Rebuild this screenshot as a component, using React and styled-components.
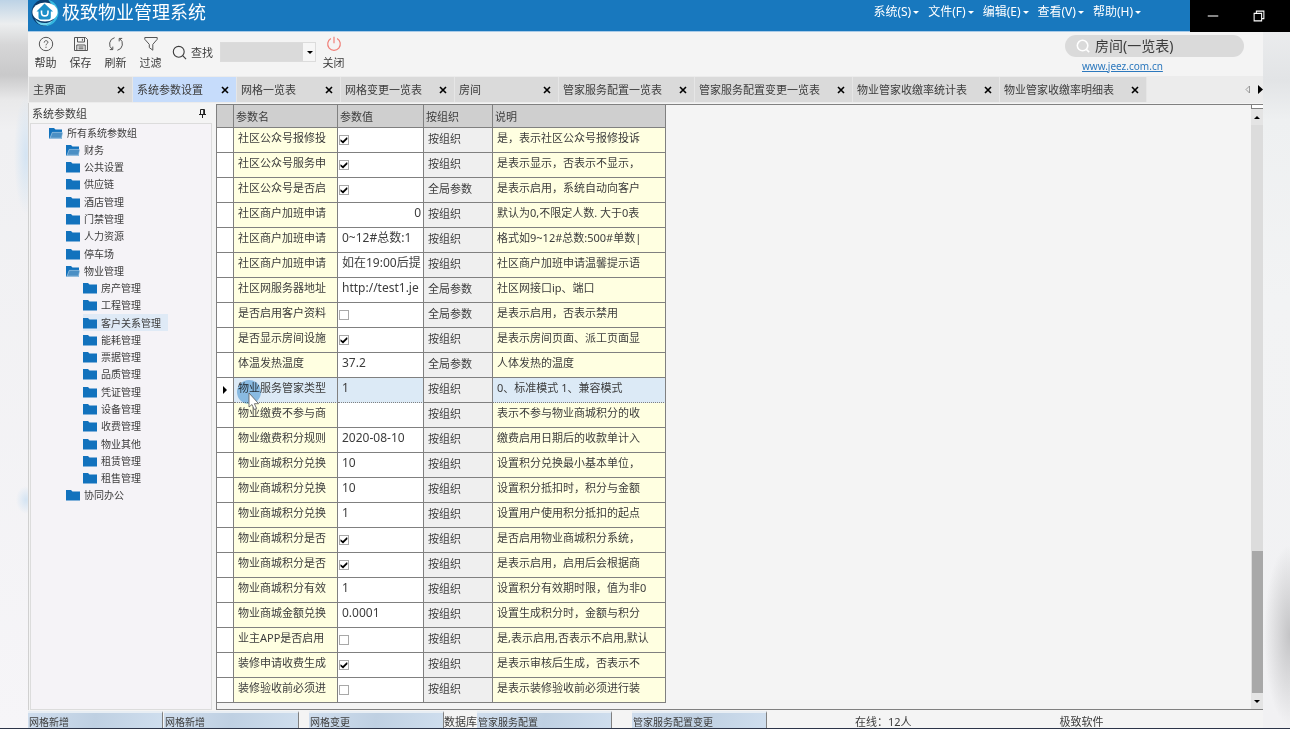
import React from 'react'
import styled, { createGlobalStyle } from 'styled-components'

const color = {
  title: '#1878be',
  text: '#3c3c3c',
  line: '#808080',
  header: '#cfcfcf',
  tab: '#dadada',
  tabActive: '#c6dcfb',
  note: '#ffffe1',
  selected: '#dceaf6',
  folder: '#1272bd'
}

const GlobalStyle = createGlobalStyle`
  * { box-sizing: border-box; }
  body {
    margin: 0;
    font-family: "Noto Sans", "Noto Sans CJK SC", sans-serif;
    font-size: 11px;
    color: ${color.text};
  }
  button, select, input { font: inherit; color: inherit; margin: 0; }
  button { border: 0; padding: 0; background: none; }
`

const Desktop = styled.div`
  display: flex;
  flex-direction: column;
  min-height: 100vh;
  border-bottom: 1px solid #2c3448;
  background:
    radial-gradient(ellipse 26px 90px at 100% 635px, #c4c4c6, transparent),
    radial-gradient(ellipse 12px 60px at 26px 155px, #d4e4f3, transparent),
    radial-gradient(ellipse 10px 14px at 26px 500px, #d4e4f3, transparent),
    linear-gradient(#f0f1f2, #e2e4e6 80px, #eef0f1 120px, #f2f3f4 300px, #f1f1f3) right / 27px 100% no-repeat,
    linear-gradient(#bdd3e6, #eceeef 24px, #d6d6d7 45px, #c9c9ca 75px, #e9e9ea 100px, #f0f0f2 130px, #f6f5f8);
`

/* title bar */

const TitleBar = styled.header`
  display: flex;
  height: 32px;
  padding-left: 28px;
`
const TitleMain = styled.div`
  flex: 1;
  display: flex;
  align-items: flex-start;
  padding: 0 49px 0 3px;
  background: ${color.title};
  border-bottom: 1px solid #a9cbe8;
  color: #fff;
`
const AppName = styled.h1`
  flex: 1;
  margin: 0 0 0 3px;
  font-size: 18px;
  font-weight: 400;
  line-height: 24px;
  white-space: nowrap;
`
const Menu = styled.nav`
  display: flex;
  gap: 9px;
`
const MenuButton = styled.button`
  display: flex;
  align-items: center;
  gap: 2px;
  font-size: 12px;
  line-height: 24px;
  white-space: nowrap;
`
const Caption = styled.div`
  display: flex;
  width: 100px;
  padding-right: 8px;
  background: #000;
  color: #fff;
`
const CaptionButton = styled.button`
  flex: 1;
  display: flex;
  align-items: center;
  justify-content: center;
`
const Caret = styled.span`
  border: 3px solid transparent;
  border-bottom-width: 0;
  border-top-color: currentColor;
`

/* toolbar */

const Window = styled.div`
  flex: 1;
  display: flex;
  flex-direction: column;
  margin: 0 27px 0 28px;
  background: #f4f4f4;
`
const Toolbar = styled.div`
  display: flex;
  align-items: center;
  height: 44px;
  padding: 0 19px 0 0;
`
const ToolButton = styled.button`
  display: flex;
  flex-direction: column;
  align-items: center;
  width: 35px;
  gap: 2px;
  line-height: 18px;

  > svg { color: ${p => p.$danger ? '#f07f78' : '#555'}; }
`
const Find = styled.label`
  display: flex;
  align-items: center;
  gap: 4px;
  margin: 0 7px 4px 4px;
`
const Combo = styled.div`
  position: relative;
  width: 96px;
  height: 20px;
  margin-bottom: 4px;

  > select {
    display: block;
    width: 100%;
    height: 100%;
    appearance: none;
    border: 1px solid #dcdcdc;
    border-radius: 0;
    background: linear-gradient(to left, #f6f6f6 12px, #dadada 12px);
  }

  > ${Caret} {
    position: absolute;
    right: 3px;
    top: 9px;
    color: #000;
    pointer-events: none;
  }
`
const QuickSearch = styled.div`
  display: flex;
  flex-direction: column;
  gap: 1px;
  width: 179px;
  margin-left: auto;

  > a {
    margin-left: 17px;
    color: #2c78bd;
    font-size: 10px;
    line-height: 16px;
  }
`
const SearchBox = styled.label`
  display: flex;
  align-items: center;
  gap: 5px;
  height: 22px;
  padding: 0 12px 0 11px;
  border-radius: 11px;
  background: #dadada;

  > input {
    flex: 1;
    min-width: 0;
    padding: 0;
    border: 0;
    background: none;
    font-size: 14px;
    line-height: 20px;
  }
`

/* tabs */

const TabBar = styled.div`
  display: flex;
  height: 27px;
  padding: 1px 0 1px 1px;
  background: #ececec;
`
const Tab = styled.div`
  display: flex;
  align-items: center;
  justify-content: space-between;
  min-width: 104px;
  padding: 0 6px 0 4px;
  gap: 16px;
  border-right: 1px solid #e6e6e6;
  background: ${p => p.$active ? color.tabActive : color.tab};
  white-space: nowrap;

  > button { line-height: 20px; }
  > button:last-child { display: flex; padding: 1px; color: #000; }
`
const TabArrows = styled.div`
  display: flex;
  align-items: center;
  gap: 8px;
  margin-left: auto;

  > button { display: flex; }
`

/* work area */

const Workspace = styled.main`
  flex: 1;
  display: flex;
  border-left: 1px solid #d0d0d0;
`
const Sidebar = styled.aside`
  display: flex;
  flex-direction: column;
  width: 187px;
  padding: 0 4px 0 1px;
`
const SidebarHead = styled.div`
  display: flex;
  align-items: center;
  justify-content: space-between;
  height: 20px;
  padding: 0 6px 0 2px;
`
const Tree = styled.div`
  flex: 1;
  border: 1px solid #dcdcdc;
  background: #f5f3f7;
`
const TreeList = styled.ul`
  display: grid;
  grid-auto-rows: 1fr;
  height: 380px;
  margin: 0;
  padding: 0;
  list-style: none;
`
const TreeItem = styled.li`
  display: flex;
  padding-left: ${p => 18 + p.$depth * 17}px;
`
const TreeButton = styled.button`
  display: flex;
  align-items: center;
  gap: 4px;
  padding-right: 7px;
  font-size: 10px;
  line-height: 16px;
  background: ${p => p.$selected ? '#dfeaf6' : 'none'};
`
const GridPanel = styled.section`
  flex: 1;
  display: flex;
  justify-content: space-between;
  margin-top: 1px;
  border: 1px solid ${color.line};
  border-right: 0;
`
const Table = styled.table`
  align-self: flex-start;
  width: 449px;
  table-layout: fixed;
  border-collapse: separate;
  border-spacing: 0;

  th, td {
    border: 0 solid ${color.line};
    border-width: 0 1px 1px 0;
    overflow: hidden;
    white-space: nowrap;
    text-align: left;
    font-weight: 400;
  }
`
const HeadCell = styled.th`
  height: 23px;
  padding: 0 2px;
  background: ${color.header};
`
const Cell = styled.td`
  height: 25px;
  padding: 0 2px 0 4px;
  vertical-align: top;
  line-height: 20px;
  background: ${p => p.$selected ? color.selected : p.$bg || '#fff'};

  && {
    text-align: ${p => p.$right ? 'right' : 'left'};
    border-bottom-style: ${p => p.$selected ? 'dotted' : 'solid'};
  }
`
const NameCell = styled(Cell)`
  && {
    position: relative;
    overflow: ${p => p.$selected ? 'visible' : 'hidden'};
  }
`
const ValueCell = styled(Cell)`
  font-size: 12px;
`
const CheckCell = styled(Cell)`
  padding: 0 1px;
  vertical-align: middle;
`
const OrgCell = styled(Cell)`
  line-height: 22px;
`
const MarkCell = styled(Cell)`
  padding: 0 6px;
  vertical-align: middle;
`
const Check = styled.input`
  display: block;
  width: 10px;
  height: 10px;
  appearance: none;
  border: 1px solid #a8a8a8;
  background: #fff;

  &:checked::before {
    content: "";
    display: block;
    width: 8px;
    height: 8px;
    background: #000;
    clip-path: polygon(6% 42%, 36% 64%, 88% 12%, 94% 38%, 38% 94%, 6% 66%);
  }
`
const RowMark = styled.span`
  display: block;
  width: 4px;
  border: 4px solid transparent;
  border-right-width: 0;
  border-left-color: #000;
`
const Pointer = styled.svg`
  position: absolute;
  left: 3px;
  top: 2px;
  z-index: 1;
  pointer-events: none;
  mix-blend-mode: ${p => p.$blend || 'normal'};
`
const ScrollBar = styled.div`
  display: flex;
  flex-direction: column;
  width: 12px;
  background: #dcdcdc;
`
const SplitBox = styled.div`
  height: 4px;
  border: 1px solid ${color.line};
  border-width: 0 0 1px 1px;
  background: #fff;
`
const ScrollButton = styled.button`
  display: flex;
  align-items: center;
  justify-content: center;
  height: 16px;
  color: #000;
  background: #e4e4e4;

  > ${Caret} { transform: ${p => p.$up ? 'rotate(180deg)' : 'none'}; }
`
const ScrollTrack = styled.div`
  flex: 1;
  display: flex;
  flex-direction: column;
  justify-content: flex-end;
  padding-left: 1px;
`
const ScrollThumb = styled.div`
  height: 25%;
  background: #a8a8a8;
`

/* status bar */

const StatusBar = styled.footer`
  display: flex;
  height: 18px;
  padding-top: 1px;
  line-height: 12px;
  white-space: nowrap;
`
const Task = styled.button`
  display: flex;
  width: 135px;
  margin-right: ${p => p.$gap || 0}px;
  padding: 3px 0 0 1px;
  border-right: 1px solid ${color.line};
  border-top: 2px solid #e8eef4;
  background: linear-gradient(100deg, #cfdded, #bfd0e2 50%, #cfdeee);
  font-size: 10px;
`
const StatusText = styled.span`
  margin-left: ${p => p.$gap || 0}px;
  padding-top: 5px;
`

const tabs = [
  '主界面', '系统参数设置', '网格一览表', '网格变更一览表', '房间', '管家服务配置一览表',
  '管家服务配置变更一览表', '物业管家收缴率统计表', '物业管家收缴率明细表'
]

const tree = [
  [0, '所有系统参数组', true],
  [1, '财务', true],
  [1, '公共设置'],
  [1, '供应链'],
  [1, '酒店管理'],
  [1, '门禁管理'],
  [1, '人力资源'],
  [1, '停车场'],
  [1, '物业管理', true],
  [2, '房产管理'],
  [2, '工程管理'],
  [2, '客户关系管理'],
  [2, '能耗管理'],
  [2, '票据管理'],
  [2, '品质管理'],
  [2, '凭证管理'],
  [2, '设备管理'],
  [2, '收费管理'],
  [2, '物业其他'],
  [2, '租赁管理'],
  [2, '租售管理'],
  [1, '协同办公']
]

const ORG = '按组织'
const ALL = '全局参数'

const rows = [
  ['社区公众号报修投', true, ORG, '是，表示社区公众号报修投诉'],
  ['社区公众号服务申', true, ORG, '是表示显示，否表示不显示，'],
  ['社区公众号是否启', true, ALL, '是表示启用，系统自动向客户'],
  ['社区商户加班申请', 0, ORG, '默认为0,不限定人数. 大于0表'],
  ['社区商户加班申请', '0~12#总数:1', ORG, '格式如9~12#总数:500#单数|'],
  ['社区商户加班申请', '如在19:00后提', ORG, '社区商户加班申请温馨提示语'],
  ['社区网服务器地址', 'http://test1.je', ALL, '社区网接口ip、端口'],
  ['是否启用客户资料', false, ALL, '是表示启用，否表示禁用'],
  ['是否显示房间设施', true, ORG, '是表示房间页面、派工页面显'],
  ['体温发热温度', '37.2', ALL, '人体发热的温度'],
  ['物业服务管家类型', '1', ORG, '0、标准模式 1、兼容模式'],
  ['物业缴费不参与商', '', ORG, '表示不参与物业商城积分的收'],
  ['物业缴费积分规则', '2020-08-10', ORG, '缴费启用日期后的收款单计入'],
  ['物业商城积分兑换', '10', ORG, '设置积分兑换最小基本单位，'],
  ['物业商城积分兑换', '10', ORG, '设置积分抵扣时，积分与金额'],
  ['物业商城积分兑换', '1', ORG, '设置用户使用积分抵扣的起点'],
  ['物业商城积分是否', true, ORG, '是否启用物业商城积分系统，'],
  ['物业商城积分是否', true, ORG, '是表示启用，启用后会根据商'],
  ['物业商城积分有效', '1', ORG, '设置积分有效期时限，值为非0'],
  ['物业商城金额兑换', '0.0001', ORG, '设置生成积分时，金额与积分'],
  ['业主APP是否启用', false, ORG, '是,表示启用,否表示不启用,默认'],
  ['装修申请收费生成', true, ORG, '是表示审核后生成，否表示不'],
  ['装修验收前必须进', false, ORG, '是表示装修验收前必须进行装']
]
const currentRow = 10

const Icon = ({ size = 16, children }) => (
  <svg width={size} height={size} viewBox='0 0 16 16' fill='none' stroke='currentColor' aria-hidden='true'>
    {children}
  </svg>
)

const HelpIcon = () => (
  <Icon>
    <circle cx='8' cy='8' r='6.7' />
    <path d='M6.2 6.6c0-2.6 3.7-2.4 3.7-.3 0 1.4-1.9 1.4-1.9 3M8 10.7v1.2' />
  </Icon>
)
const SaveIcon = () => (
  <Icon>
    <path d='M1.5 1.5h11l2 2v11h-13zM4.5 1.5V6h7V1.5M9.4 2.8v2M3.8 14.5V9h8.4v5.5M5.5 11h5M5.5 12.8h5' />
  </Icon>
)
const RefreshIcon = () => (
  <Icon>
    <path d='M6.6 1.7A6.5 6.5 0 0 0 4.4 13.4M1.8 13.6h3V10.6M9.4 14.3A6.5 6.5 0 0 0 11.600 2.6M14.2 2.400h-3V5.4' />
  </Icon>
)
const FilterIcon = () => (
  <Icon><path d='M1.8 1.5h12.4v1.8L9.8 8.4v5.8L6.3 11.6V8.4L1.8 3.3z' /></Icon>
)
const PowerIcon = () => (
  <Icon><path d='M8 .8v6.4M4.9 2.6a6.3 6.3 0 1 0 6.2 0' strokeWidth='1.2' /></Icon>
)
const SearchIcon = ({ size, width = 1.2 }) => (
  <Icon size={size}>
    <circle cx='7.2' cy='7.2' r='5.8' strokeWidth={width} />
    <path d='M11.4 11.4l3.6 3.6' strokeWidth={width} />
  </Icon>
)

const Logo = () => (
  <svg width='28' height='28' viewBox='0 0 28 28' aria-hidden='true'>
    <circle cx='14' cy='12.5' r='13.4' fill='#0b3c6e' />
    <path d='M17 -.5A13.4 13.4 0 0 1 14 26C21 23 26 18 24 9z' fill='#35b9e2' />
    <ellipse cx='14' cy='12' rx='12.6' ry='9.6' fill='#fff' />
    <path d='M4 19c4 5 13 5.5 18 1-2 4-6 5.5-9 5.5C8.5 25.5 5.5 22.5 4 19z' fill='#6fd3ee' />
    <path d='M5.5 11.5L13.5 3.6 22 11.5h-2.2V17a2.5 2.5 0 0 1-2.500 2.500h-7.300A2.500 2.500 0 0 1 7.500 17v-5.500z' fill='#1c8fc9' />
    <path d='M10.5 10.500v2c0 4.500 6.500 4.500 6.500 0v-2' fill='none' stroke='#fff' strokeWidth='1.6' />
  </svg>
)

const Folder = ({ open }) => (
  <svg width='14' height='12' viewBox='0 0 14 12' aria-hidden='true'>
    <path d='M0 1h5l1.5 1.500H13V11.500H0z' fill={color.folder} />
    {open
      ? <path d='M1 11.200L3.200 5.400H14L12.400 11.200z' fill='#4b8fc4' stroke='#d6e6f3' strokeWidth='.5' />
      : <path d='M13 2.500h1v9h-1z' fill={color.folder} />}
  </svg>
)

const Value = ({ name, value, selected }) => {
  if (typeof value === 'boolean') return (
    <CheckCell $selected={selected}>
      <Check type='checkbox' defaultChecked={value} aria-label={name} />
    </CheckCell>
  )
  return <ValueCell $selected={selected} $right={typeof value === 'number'}>{value}</ValueCell>
}

const ParamTable = () => (
  <Table>
    <colgroup>
      <col width='17' />
      <col width='104' />
      <col width='86' />
      <col width='69' />
      <col />
    </colgroup>
    <thead>
      <tr>
        <HeadCell />
        <HeadCell>参数名</HeadCell>
        <HeadCell>参数值</HeadCell>
        <HeadCell>按组织</HeadCell>
        <HeadCell>说明</HeadCell>
      </tr>
    </thead>
    <tbody>
      {rows.map(([name, value, scope, note], i) => {
        const selected = i === currentRow
        return (
          <tr key={i}>
            <MarkCell>{selected && <RowMark />}</MarkCell>
            <NameCell $bg={color.note} $selected={selected}>
              {name}
              {selected && (
                <>
                  <Pointer $blend='multiply' width='24' height='24' viewBox='0 0 24 24' aria-hidden='true'>
                    <circle cx='12' cy='12' r='12' fill='#9fcbea' />
                  </Pointer>
                  <Pointer width='24' height='32' viewBox='0 0 24 32' aria-hidden='true'>
                    <path d='M12 13v14l3-2.500 2.200 5 2.400-1-2.200-4.800h4.200z' fill='#fff' stroke='#555' strokeWidth='.8' />
                  </Pointer>
                </>
              )}
            </NameCell>
            <Value name={name} value={value} selected={selected} />
            <OrgCell $bg='#efefef'>{scope}</OrgCell>
            <Cell $bg={color.note} $selected={selected}>{note}</Cell>
          </tr>
        )
      })}
    </tbody>
  </Table>
)

const App = () => (
  <Desktop>
    <GlobalStyle />
    <TitleBar>
      <TitleMain>
        <Logo />
        <AppName>极致物业管理系统</AppName>
        <Menu>
          {['系统(S)', '文件(F)', '编辑(E)', '查看(V)', '帮助(H)'].map(o => (
            <MenuButton key={o}>{o}<Caret /></MenuButton>
          ))}
        </Menu>
      </TitleMain>
      <Caption>
        <CaptionButton aria-label='最小化'>
          <Icon size={12}><path d='M1 8h14' strokeWidth='1.4' /></Icon>
        </CaptionButton>
        <CaptionButton aria-label='还原'>
          <Icon size={12}><path d='M1.5 4.5h10v10h-10zM4.5 4.5v-3h10v10h-3' strokeWidth='1.4' /></Icon>
        </CaptionButton>
      </Caption>
    </TitleBar>

    <Window>
      <Toolbar>
        <ToolButton><HelpIcon />帮助</ToolButton>
        <ToolButton><SaveIcon />保存</ToolButton>
        <ToolButton><RefreshIcon />刷新</ToolButton>
        <ToolButton><FilterIcon />过滤</ToolButton>
        <Find htmlFor='find'><SearchIcon size={15} />查找</Find>
        <Combo>
          <select id='find' />
          <Caret />
        </Combo>
        <ToolButton $danger><PowerIcon />关闭</ToolButton>
        <QuickSearch>
          <SearchBox>
            <svg width='14' height='14' viewBox='0 0 16 16' fill='none' stroke='#fff' strokeWidth='1.8' aria-hidden='true'>
              <circle cx='7.5' cy='7.5' r='6' />
              <path d='M11.8 11.8l3.2 3.2' />
            </svg>
            <input aria-label='搜索' defaultValue='房间(一览表)' />
          </SearchBox>
          <a href='http://www.jeez.com.cn'>www.jeez.com.cn</a>
        </QuickSearch>
      </Toolbar>

      <TabBar>
        {tabs.map((o, i) => (
          <Tab key={o} $active={i === 1}>
            <button>{o}</button>
            <button aria-label={`关闭${o}`}>
              <svg width='8' height='8' viewBox='0 0 8 8' stroke='currentColor' strokeWidth='1.6'>
                <path d='M1 1l6 6M7 1L1 7' />
              </svg>
            </button>
          </Tab>
        ))}
        <TabArrows>
          <button aria-label='向左'>
            <svg width='5' height='9' viewBox='0 0 5 9'><path d='M4.5 1v7L1 4.5z' fill='none' stroke='#888' strokeWidth='.8' /></svg>
          </button>
          <button aria-label='向右'>
            <svg width='5' height='9' viewBox='0 0 5 9'><path d='M0 0v9l5-4.5z' /></svg>
          </button>
        </TabArrows>
      </TabBar>

      <Workspace>
        <Sidebar>
          <SidebarHead>
            系统参数组
            <svg width='7' height='9' viewBox='0 0 7 9' fill='none' stroke='#222' aria-hidden='true'>
              <path d='M1.5 .5h4V5M1.5 .5V5M0 5.5h7M3.5 5.5V9M4.7 .5V5' />
            </svg>
          </SidebarHead>
          <Tree>
            <TreeList>
              {tree.map(([depth, label, open]) => (
                <TreeItem key={label} $depth={depth}>
                  <TreeButton $selected={label === '客户关系管理'}>
                    <Folder open={open} />{label}
                  </TreeButton>
                </TreeItem>
              ))}
            </TreeList>
          </Tree>
        </Sidebar>
        <GridPanel>
          <ParamTable />
          <ScrollBar>
            <SplitBox />
            <ScrollButton $up aria-label='向上滚动'><Caret /></ScrollButton>
            <ScrollTrack><ScrollThumb /></ScrollTrack>
            <ScrollButton aria-label='向下滚动'><Caret /></ScrollButton>
          </ScrollBar>
        </GridPanel>
      </Workspace>

      <StatusBar>
        <Task $gap={1}>网格新增</Task>
        <Task $gap={10}>网格新增</Task>
        <Task>网格变更</Task>
        <StatusText>数据库</StatusText>
        <Task $gap={20}>管家服务配置</Task>
        <Task>管家服务配置变更</Task>
        <StatusText $gap={88}>在线：12人</StatusText>
        <StatusText $gap={148}>极致软件</StatusText>
      </StatusBar>
    </Window>
  </Desktop>
)

export default App
